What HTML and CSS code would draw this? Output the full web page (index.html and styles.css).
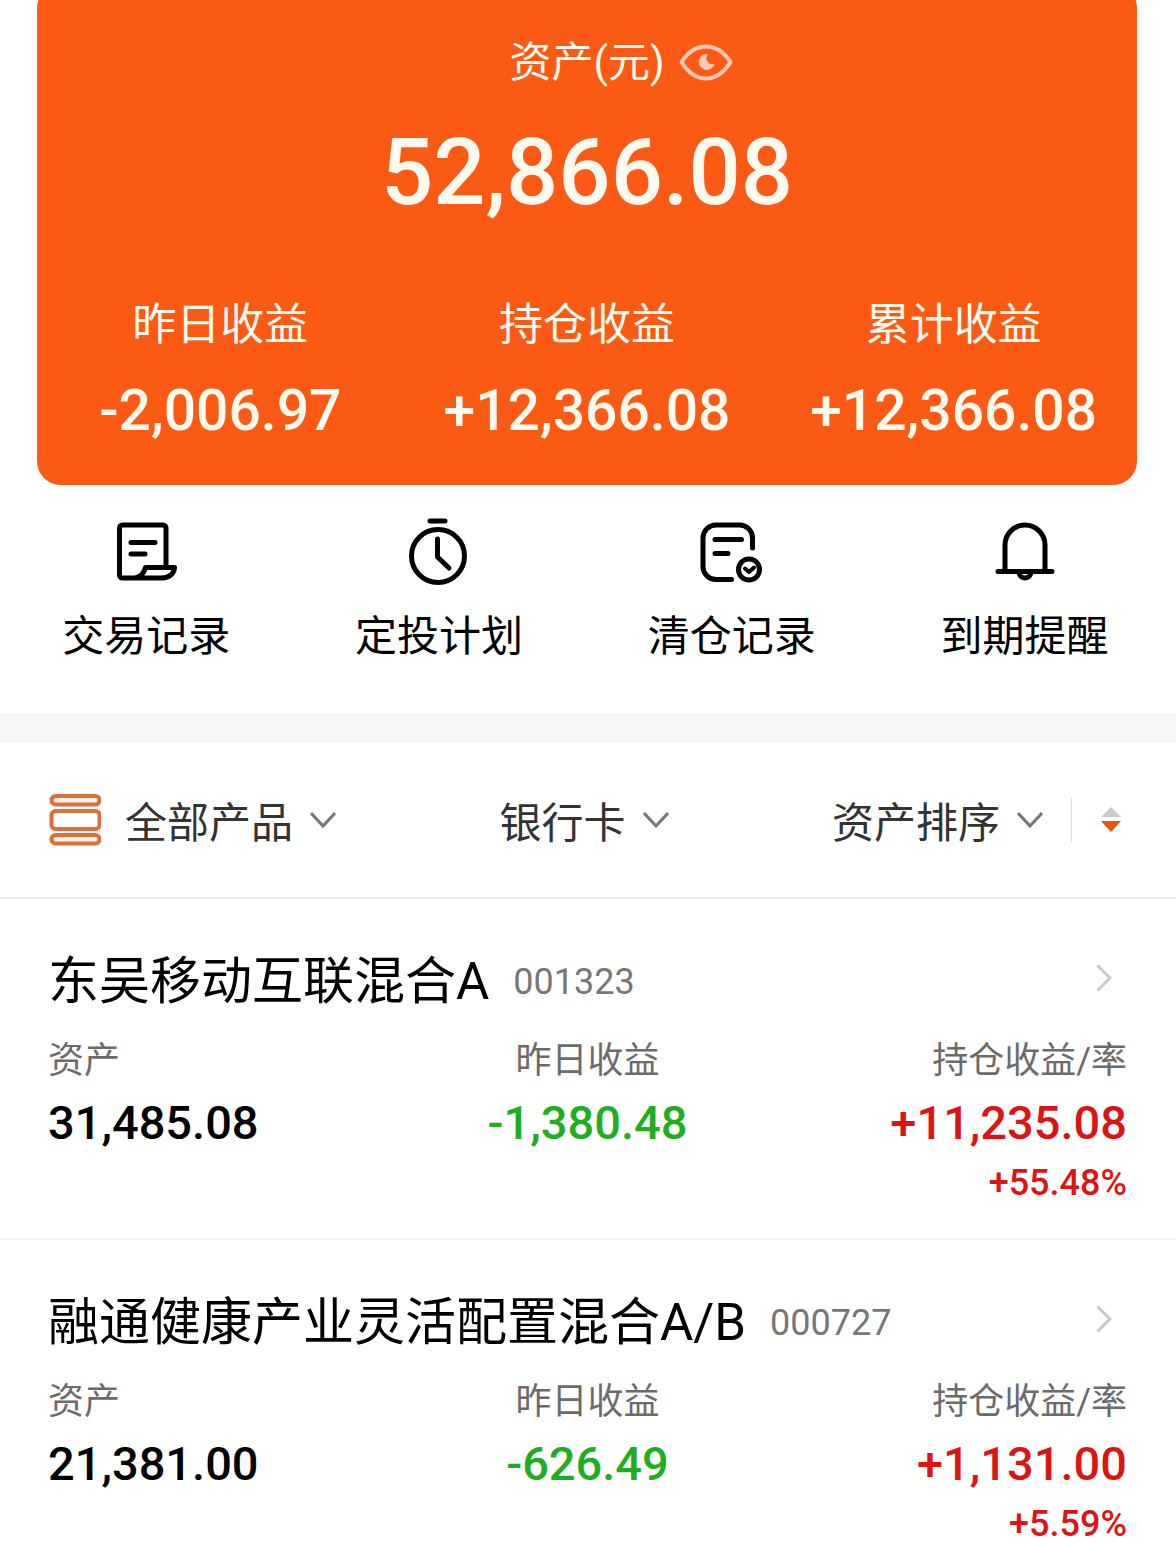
FILE: index.html
```html
<!DOCTYPE html>
<html lang="zh-CN">
<head>
<meta charset="utf-8">
<meta name="viewport" content="width=device-width, initial-scale=1">
<title>资产</title>
<link rel="stylesheet" href="styles.css">
</head>
<body>
<section class="summary">
  <div class="summary-head">
    <h1 class="summary-title">资产(元)</h1>
    <button class="eye" type="button" aria-label="隐藏金额">
      <svg width="54" height="38" viewBox="0 0 54 38" fill="none">
        <path d="M2.500 18C9 8 17.500 2.500 27 2.500s18 5.500 24.500 15.500C45 28.500 36.500 34.500 27 34.500S9 28.500 2.500 18Z" stroke="#ffc9b8" stroke-width="4" stroke-linejoin="round"/>
        <path d="M29 10A8 8 0 1 0 35.500 20A6.200 6.200 0 0 1 29 10Z" fill="#ffc9b8"/>
      </svg>
    </button>
  </div>
  <p class="summary-total">52,866.08</p>
  <dl class="stats">
    <div class="stat"><dt>昨日收益</dt><dd>-2,006.97</dd></div>
    <div class="stat"><dt>持仓收益</dt><dd>+12,366.08</dd></div>
    <div class="stat"><dt>累计收益</dt><dd>+12,366.08</dd></div>
  </dl>
</section>

<nav class="actions">
  <a class="action" href="#records">
    <svg class="action-icon" viewBox="0 0 64 68">
      <path d="M52 49V10a3 3 0 0 0-3-3H8.500a3 3 0 0 0-3 3v47a3 3 0 0 0 3 3H47c8 0 13-4 13.500-10.500H31.500C30 55 27 59 21 60"/>
      <path d="M17 24.500h24M17 36h14"/>
    </svg>
    <span>交易记录</span>
  </a>
  <a class="action" href="#plans">
    <svg class="action-icon" viewBox="0 0 64 68">
      <circle cx="31" cy="38" r="26.500"/>
      <path d="M23 3h15M30.500 21v18L42 50"/>
    </svg>
    <span>定投计划</span>
  </a>
  <a class="action" href="#cleared">
    <svg class="action-icon" viewBox="0 0 64 68">
      <path d="M52.500 30V20A13 13 0 0 0 39.500 7H16a13 13 0 0 0-13 13v28.500a13 13 0 0 0 13 13H31.500"/>
      <path d="M15 21.500H41.500M15 35.500H28"/>
      <circle cx="49" cy="51.500" r="10.500"/>
      <path stroke-width="4" d="M45 50.500l4 3.500 5-4.500"/>
    </svg>
    <span>清仓记录</span>
  </a>
  <a class="action" href="#reminders">
    <svg class="action-icon" viewBox="0 0 64 68">
      <path d="M12 53V27a20 20 0 0 1 40 0v26M5 53.500h54M26 54a6 6 0 0 0 12 0"/>
    </svg>
    <span>到期提醒</span>
  </a>
</nav>

<div class="filters">
  <label class="filter">
    <svg class="filter-icon" viewBox="0 0 52 52" fill="#fff0e2" stroke="#dc6d3c" stroke-width="4">
      <rect x="2.500" y="2" width="48" height="8.500" rx="4.200"/>
      <rect x="2.500" y="17" width="48" height="18" rx="4" fill="#fff"/>
      <rect x="2.500" y="41" width="48" height="8.500" rx="4.200"/>
    </svg>
    <select class="picker" aria-label="产品"><option>全部产品</option></select>
    <svg class="chevron" viewBox="0 0 26 18"><path d="M1 2l12 13L25 2"/></svg>
  </label>
  <label class="filter">
    <select class="picker" aria-label="支付方式"><option>银行卡</option></select>
    <svg class="chevron" viewBox="0 0 26 18"><path d="M1 2l12 13L25 2"/></svg>
  </label>
  <div class="sorting">
    <label class="filter">
      <select class="picker" aria-label="排序"><option>资产排序</option></select>
      <svg class="chevron" viewBox="0 0 26 18"><path d="M1 2l12 13L25 2"/></svg>
    </label>
    <button class="direction" type="button" aria-label="降序">
      <svg width="22" height="26" viewBox="0 0 22 26">
        <path d="M11 0l10 10H1z" fill="#cccccc"/>
        <path d="M1 14h20L11 25z" fill="#f2500f"/>
      </svg>
    </button>
  </div>
</div>

<main>
  <article class="fund">
    <a class="fund-head" href="#001323">
      <h2 class="fund-name">东吴移动互联混合A</h2>
      <span class="fund-code">001323</span>
      <svg class="arrow" viewBox="0 0 16 28"><path d="M1.500 1.500L14 14 1.500 26.500"/></svg>
    </a>
    <dl class="figures">
      <div class="figure"><dt>资产</dt><dd>31,485.08</dd></div>
      <div class="figure"><dt>昨日收益</dt><dd class="loss">-1,380.48</dd></div>
      <div class="figure"><dt>持仓收益/率</dt><dd class="gain">+11,235.08</dd><dd class="gain rate">+55.48%</dd></div>
    </dl>
  </article>
  <article class="fund">
    <a class="fund-head" href="#000727">
      <h2 class="fund-name">融通健康产业灵活配置混合A/B</h2>
      <span class="fund-code">000727</span>
      <svg class="arrow" viewBox="0 0 16 28"><path d="M1.500 1.500L14 14 1.500 26.500"/></svg>
    </a>
    <dl class="figures">
      <div class="figure"><dt>资产</dt><dd>21,381.00</dd></div>
      <div class="figure"><dt>昨日收益</dt><dd class="loss">-626.49</dd></div>
      <div class="figure"><dt>持仓收益/率</dt><dd class="gain">+1,131.00</dd><dd class="gain rate">+5.59%</dd></div>
    </dl>
  </article>
</main>
</body>
</html>
```
FILE: styles.css
```css
* {
  box-sizing: border-box;
}

body,
h1,
h2,
p,
dl,
dd {
  margin: 0;
}

body {
  background: #fff;
  color: #000;
  font-family: Roboto, "Noto Sans CJK SC", sans-serif;
}

h1,
h2 {
  font-weight: 400;
}

a {
  color: inherit;
  text-decoration: none;
}

button,
select {
  padding: 0;
  border: 0;
  background: none;
  color: inherit;
  font: inherit;
}

svg {
  display: block;
  flex: none;
}

/* Asset summary card */
.summary {
  margin: -16px 39px 0 37px;
  padding: 49px 0 38px;
  border-radius: 24px;
  background: #fb5a14;
  color: #fffaf0;
}

.summary-head {
  display: grid;
  grid-template-columns: 1fr auto 1fr;
  column-gap: 14px;
  align-items: center;
}

.summary-title {
  grid-column: 2;
  font-size: 42px;
  line-height: 60px;
}

.eye {
  justify-self: start;
}

.summary-total {
  margin-top: 24px;
  font-size: 92px;
  font-weight: 500;
  line-height: 112px;
  text-align: center;
}

.stats {
  display: grid;
  grid-template-columns: repeat(3, 1fr);
  margin-top: 66px;
  text-align: center;
}

.stat dt {
  font-size: 44px;
  line-height: 60px;
}

.stat dd {
  margin-top: 20px;
  font-size: 57px;
  font-weight: 500;
  line-height: 72px;
}

/* Shortcuts */
.actions {
  display: grid;
  grid-template-columns: repeat(4, 1fr);
  padding: 33px 5px 46px 0;
  border-bottom: 30px solid #f7f7f7;
}

.action {
  display: flex;
  flex-direction: column;
  align-items: center;
  gap: 21px;
  font-size: 42px;
  line-height: 60px;
}

.action-icon {
  width: 64px;
  height: 68px;
  fill: none;
  stroke: #000;
  stroke-width: 5;
  stroke-linecap: round;
  stroke-linejoin: round;
}

/* Filter bar */
.filters {
  display: flex;
  justify-content: space-between;
  align-items: center;
  height: 156px;
  padding: 0 54px 0 49px;
  border-bottom: 2px solid #eee;
  color: #333;
  font-size: 42px;
  line-height: 60px;
}

.filter,
.sorting {
  display: flex;
  align-items: center;
}

.filter-icon {
  width: 52px;
  height: 52px;
  margin-right: 24px;
}

.picker {
  height: 60px;
  padding-top: 4px;
  appearance: none;
}

.chevron {
  width: 26px;
  height: 18px;
  margin-left: 16px;
  fill: none;
  stroke: #777;
  stroke-width: 3;
}

.direction {
  display: flex;
  align-items: center;
  height: 44px;
  margin-left: 28px;
  padding-left: 28px;
  border-left: 1px solid #ddd;
}

/* Fund list */
.fund {
  padding: 47px 49px 31px 48px;
  border-bottom: 2px solid #f5f5f5;
}

.fund:last-child {
  border-bottom: 0;
}

.fund-head {
  display: flex;
  align-items: center;
}

.fund-name {
  font-size: 51px;
  line-height: 72px;
}

.fund-code {
  margin-left: 24px;
  color: #777;
  font-size: 36px;
  line-height: 72px;
}

.arrow {
  width: 16px;
  height: 28px;
  margin: 0 15px 8px auto;
  fill: none;
  stroke: #c8c8c8;
  stroke-width: 3;
}

.figures {
  display: grid;
  grid-template-columns: repeat(3, 1fr);
  margin-top: 19px;
}

.figure:nth-child(2) {
  text-align: center;
}

.figure:nth-child(3) {
  text-align: right;
}

.figure dt {
  color: #6b6b6b;
  font-size: 36px;
  line-height: 48px;
}

.figure dd {
  margin-top: 6px;
  font-size: 47px;
  font-weight: 500;
  line-height: 64px;
}

.figure .rate {
  margin-top: 4px;
  font-size: 36px;
  line-height: 48px;
}

.loss {
  color: #1fae1f;
}

.gain {
  color: #dc1414;
}
```
